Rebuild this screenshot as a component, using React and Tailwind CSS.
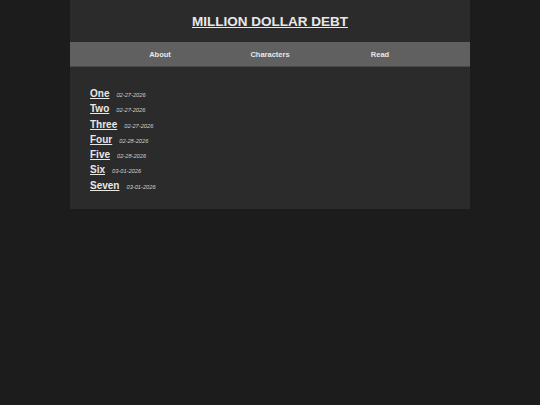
import React from 'react';

const chapters = [
  { title: 'One', date: '02-27-2026' },
  { title: 'Two', date: '02-27-2026' },
  { title: 'Three', date: '02-27-2026' },
  { title: 'Four', date: '02-28-2026' },
  { title: 'Five', date: '02-28-2026' },
  { title: 'Six', date: '03-01-2026' },
  { title: 'Seven', date: '03-01-2026' },
];

const App = () => (
  <div className="min-h-[405px] bg-[#1c1c1c] text-[#e8e8e8]" style={{ fontFamily: '"Liberation Sans", Arial, sans-serif' }}>
    <div className="mx-auto w-[400px] bg-[#2b2b2b]">
      <header className="h-[42px] pt-[2px] flex items-center justify-center">
        <a href="#" className="text-[13.5px] font-bold underline leading-none">MILLION DOLLAR DEBT</a>
      </header>
      <nav className="h-[25px] pt-[1px] bg-[#606060] border-b border-[#4a4a4a] grid grid-cols-[110px_110px_110px] justify-center items-center text-[7.5px] font-bold">
        <a href="#" className="text-center">About</a>
        <a href="#" className="text-center">Characters</a>
        <a href="#" className="text-center">Read</a>
      </nav>
      <ul className="px-5 pt-[19px] pb-[16px]">
        {chapters.map((c) => (
          <li key={c.title} className="h-[15.3px] flex items-baseline gap-[7px]">
            <a href="#" className="text-[10px] font-bold underline leading-[15px]">{c.title}</a>
            <span className="text-[5.7px] italic text-[#d0d0d0]">{c.date}</span>
          </li>
        ))}
      </ul>
    </div>
  </div>
);

export default App;
